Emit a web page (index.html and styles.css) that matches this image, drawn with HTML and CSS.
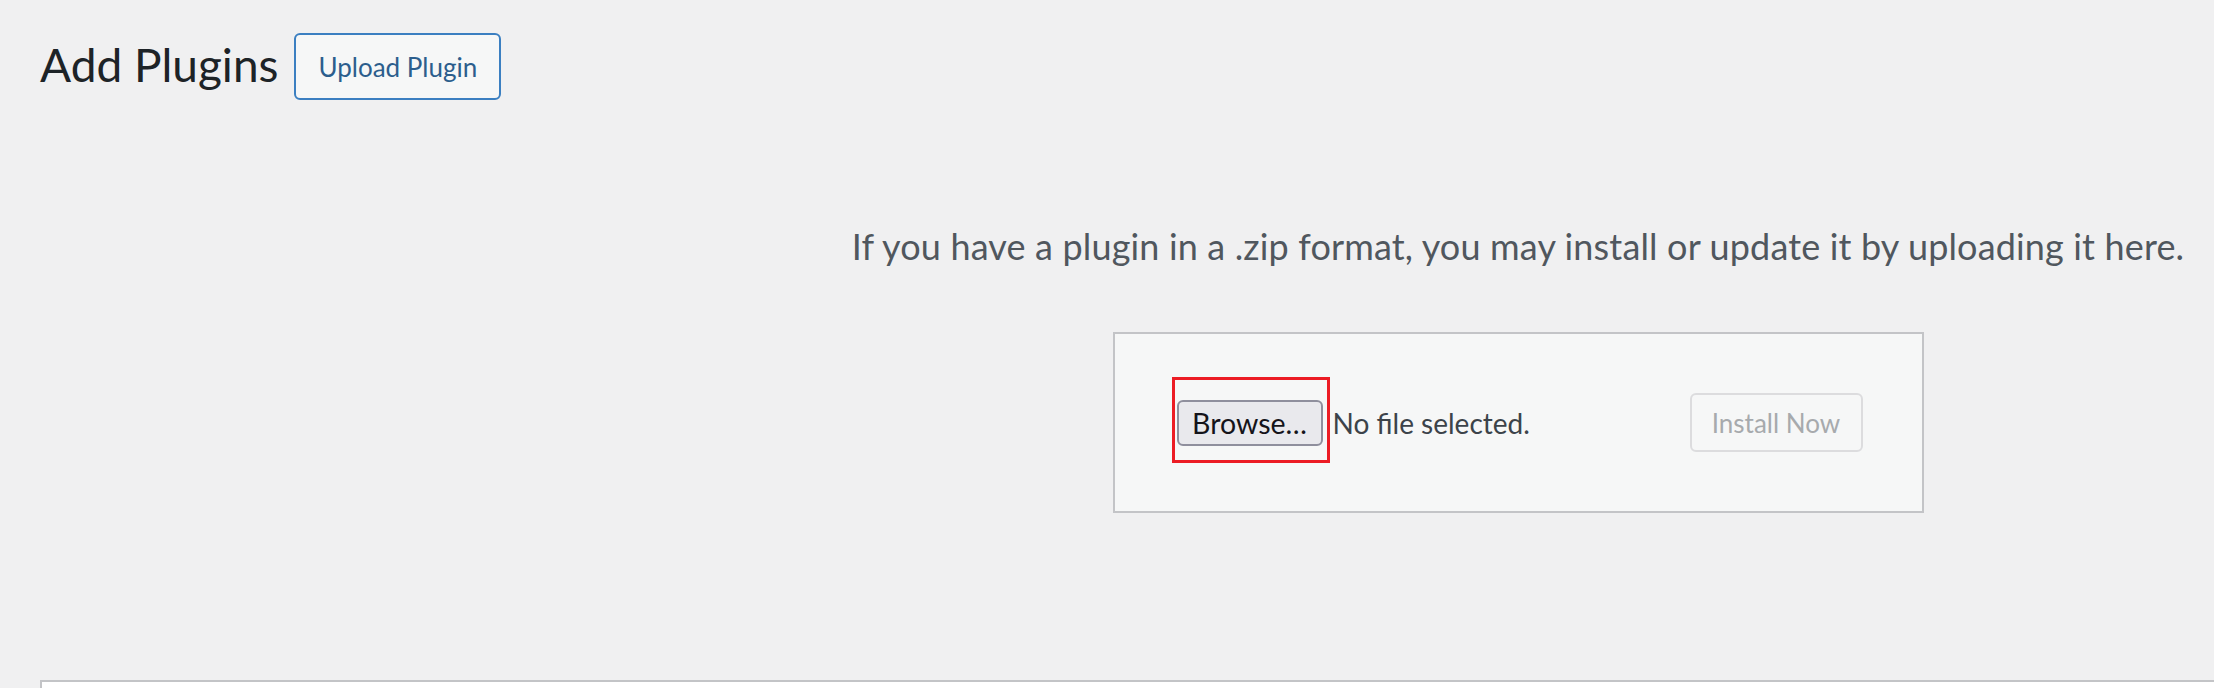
FILE: index.html
```html
<!DOCTYPE html>
<html lang="en">
<head>
<meta charset="utf-8">
<title>Add Plugins</title>
<link rel="stylesheet" href="styles.css">
</head>
<body>
<div class="wrap">
  <div class="page-header">
    <h1 class="page-title">Add Plugins</h1>
    <a class="upload-toggle">Upload Plugin</a>
  </div>
  <div class="upload-plugin">
    <p class="install-help">If you have a plugin in a .zip format, you may install or update it by uploading it here.</p>
    <form class="upload-form">
      <div class="file-field">
        <span class="browse-btn">Browse…<span class="highlight"></span></span>
        <span class="file-name">No file selected.</span>
      </div>
      <span class="install-btn">Install Now</span>
    </form>
  </div>
  <div class="plugin-list"></div>
</div>
</body>
</html>
```
FILE: styles.css
```css
html, body {
  margin: 0;
  padding: 0;
  background: #f0f0f1;
  overflow: hidden;
  height: 688px;
}
body {
  font-family: "Lato", "Noto Sans", sans-serif;
  color: #3c434a;
}
.wrap {
  padding-left: 40px;
}
.page-header {
  display: flex;
  align-items: center;
  gap: 16px;
  padding-top: 33px;
}
.page-title {
  margin: 0;
  font-size: 46px;
  font-weight: 400;
  color: #1d2327;
  line-height: 64px;
  padding-bottom: 3px;
}
.upload-toggle {
  display: flex;
  align-items: center;
  box-sizing: border-box;
  height: 67px;
  padding: 0 22px;
  border: 2px solid #3b7fc1;
  border-radius: 6px;
  background: #f6f7f7;
  color: #2c5e8d;
  font-size: 26px;
}
.upload-plugin {
  margin-left: 782px;
  text-align: center;
}
.install-help {
  margin: 0;
  padding-top: 121px;
  font-size: 36px;
  line-height: 50px;
  letter-spacing: 0.15px;
  color: #50575e;
  white-space: nowrap;
}
.upload-form {
  display: inline-flex;
  justify-content: space-between;
  align-items: center;
  box-sizing: border-box;
  width: 811px;
  height: 181px;
  margin-top: 61px;
  padding: 0 59px 0 62px;
  background: #f6f7f7;
  border: 2px solid #c3c4c7;
}
.file-field {
  display: flex;
  align-items: center;
  gap: 10px;
}
.browse-btn {
  position: relative;
  display: flex;
  align-items: center;
  justify-content: center;
  box-sizing: border-box;
  width: 146px;
  height: 46px;
  border: 2px solid #8f8f9d;
  border-radius: 6px;
  background: #e9e9ed;
  color: #15141a;
  font-size: 28.5px;
}
.highlight {
  position: absolute;
  left: -7px;
  top: -25px;
  width: 158px;
  height: 86px;
  box-sizing: border-box;
  border: 3px solid #ec1c24;
}
.file-name {
  font-size: 28px;
  color: #3c434a;
}
.install-btn {
  display: flex;
  align-items: center;
  justify-content: center;
  box-sizing: border-box;
  width: 173px;
  height: 59px;
  border: 2px solid #dcdcde;
  border-radius: 6px;
  background: #f6f7f7;
  color: #a7aaad;
  font-size: 26px;
}
.plugin-list {
  margin-top: 167px;
  width: 2400px;
  height: 200px;
  background: #fff;
  border: 2px solid #c3c4c7;
}
```
